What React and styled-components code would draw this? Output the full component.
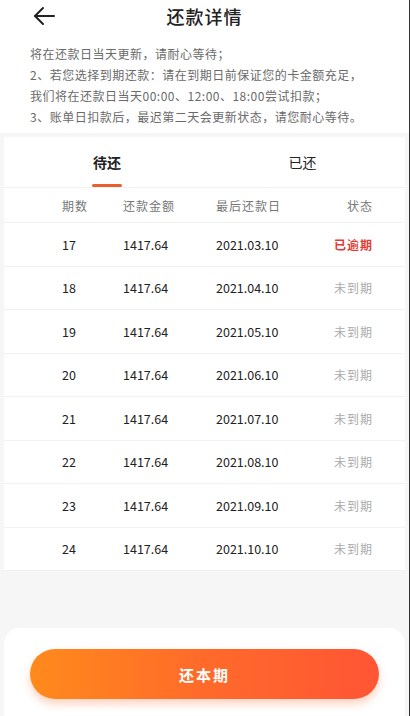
import React, { useState } from "react";
import styled, { createGlobalStyle } from "styled-components";

const GlobalStyle = createGlobalStyle`
  html, body {
    margin: 0;
    padding: 0;
    background: #f6f6f6;
  }
  body {
    font-family: "Noto Sans CJK SC", "Noto Sans", sans-serif;
    color: #222;
  }
  * { box-sizing: border-box; }
`;

const Page = styled.div`
  width: 410px;
  min-height: 716px;
  display: flex;
  flex-direction: column;
  background: #f6f6f6;
  border-right: 1px solid #333;
`;

const Header = styled.header`
  background: #fff;
  padding: 0 0 6px;
`;

const TitleBar = styled.div`
  height: 32px;
  display: flex;
  align-items: center;
  justify-content: center;
  position: relative;
`;

const BackButton = styled.button`
  position: absolute;
  left: 31px;
  top: 4px;
  width: 26px;
  height: 24px;
  padding: 0;
  border: 0;
  background: none;
  display: flex;
  align-items: center;
  justify-content: center;
`;

const Title = styled.h1`
  margin: 0;
  font-size: 18px;
  font-weight: 500;
  letter-spacing: 1px;
  color: #222;
`;

const Notes = styled.div`
  padding: 11px 20px 0 30px;
  font-size: 12px;
  line-height: 21px;
  color: #6a6a6a;
  letter-spacing: 0.5px;
  white-space: nowrap;
`;

const Card = styled.section`
  margin: 4px 4px 0;
  background: #fff;
`;

const Tabs = styled.div`
  display: grid;
  grid-template-columns: 1fr 1fr;
  height: 51px;
  border-bottom: 1px solid #f2f2f2;
`;

const Tab = styled.button`
  border: 0;
  background: none;
  padding: 0;
  font-family: inherit;
  font-size: 14px;
  font-weight: ${(p) => (p.$active ? 700 : 400)};
  color: #222;
  display: flex;
  align-items: center;
  justify-content: center;
  position: relative;
  justify-self: start;
  margin-left: ${(p) => (p.$side === "left" ? "84px" : "79px")};
  width: 38px;
`;

const Underline = styled.span`
  position: absolute;
  bottom: 0;
  left: 50%;
  transform: translateX(-50%);
  width: 30px;
  height: 3px;
  border-radius: 2px;
  background: #e8602c;
`;

const Row = styled.div`
  display: grid;
  grid-template-columns: 61px 93px 1fr 70px;
  align-items: center;
  height: ${(p) => (p.$head ? "35px" : "43.5px")};
  padding: 0 32px 0 58px;
  border-bottom: 1px solid #f2f2f2;
  font-size: ${(p) => (p.$head ? "12px" : "12.5px")};
  color: ${(p) => (p.$head ? "#777" : "#222")};
  letter-spacing: ${(p) => (p.$head ? "1px" : "0")};
`;

const Cell = styled.span`
  text-align: ${(p) => (p.$right ? "right" : "left")};
`;

const Status = styled.span`
  text-align: right;
  font-size: 12px;
  letter-spacing: 1px;
  color: ${(p) => (p.$overdue ? "#e33b35" : "#aaa")};
  font-weight: ${(p) => (p.$overdue ? 600 : 400)};
`;

const Spacer = styled.div`
  flex: 1;
`;

const Footer = styled.footer`
  margin: 0 4px;
  height: 88px;
  background: #fff;
  border-radius: 16px 16px 0 0;
  display: flex;
  align-items: flex-start;
  justify-content: center;
  padding-top: 21px;
`;

const PayButton = styled.button`
  width: 349px;
  height: 50px;
  border: 0;
  border-radius: 25px;
  background: linear-gradient(90deg, #ff8a1c 0%, #ff6a2a 50%, #ff5535 100%);
  box-shadow: 0 5px 8px rgba(255, 110, 50, 0.3);
  color: #fff;
  font-family: inherit;
  font-size: 15px;
  font-weight: 700;
  letter-spacing: 2px;
`;

const rows = [
  { n: 17, date: "2021.03.10", overdue: true },
  { n: 18, date: "2021.04.10" },
  { n: 19, date: "2021.05.10" },
  { n: 20, date: "2021.06.10" },
  { n: 21, date: "2021.07.10" },
  { n: 22, date: "2021.08.10" },
  { n: 23, date: "2021.09.10" },
  { n: 24, date: "2021.10.10" },
];

function BackArrow() {
  return (
    <svg width="24" height="20" viewBox="0 0 24 20" fill="none" stroke="#222" strokeWidth="2" strokeLinecap="round" strokeLinejoin="round">
      <path d="M22 10H3" />
      <path d="M11 2L3 10l8 8" />
    </svg>
  );
}

export default function App() {
  const [tab, setTab] = useState(0);
  return (
    <>
      <GlobalStyle />
      <Page>
        <Header>
          <TitleBar>
            <BackButton aria-label="back">
              <BackArrow />
            </BackButton>
            <Title>还款详情</Title>
          </TitleBar>
          <Notes>
            <div>将在还款日当天更新，请耐心等待；</div>
            <div>2、若您选择到期还款：请在到期日前保证您的卡金额充足，</div>
            <div>我们将在还款日当天00:00、12:00、18:00尝试扣款；</div>
            <div>3、账单日扣款后，最迟第二天会更新状态，请您耐心等待。</div>
          </Notes>
        </Header>
        <Card>
          <Tabs>
            <Tab $side="left" $active={tab === 0} onClick={() => setTab(0)}>
              待还
              {tab === 0 && <Underline />}
            </Tab>
            <Tab $side="right" $active={tab === 1} onClick={() => setTab(1)}>
              已还
              {tab === 1 && <Underline />}
            </Tab>
          </Tabs>
          <Row $head>
            <Cell>期数</Cell>
            <Cell>还款金额</Cell>
            <Cell>最后还款日</Cell>
            <Cell $right>状态</Cell>
          </Row>
          {rows.map((r) => (
            <Row key={r.n}>
              <Cell>{r.n}</Cell>
              <Cell>1417.64</Cell>
              <Cell>{r.date}</Cell>
              <Status $overdue={r.overdue}>{r.overdue ? "已逾期" : "未到期"}</Status>
            </Row>
          ))}
        </Card>
        <Spacer />
        <Footer>
          <PayButton>还本期</PayButton>
        </Footer>
      </Page>
    </>
  );
}
